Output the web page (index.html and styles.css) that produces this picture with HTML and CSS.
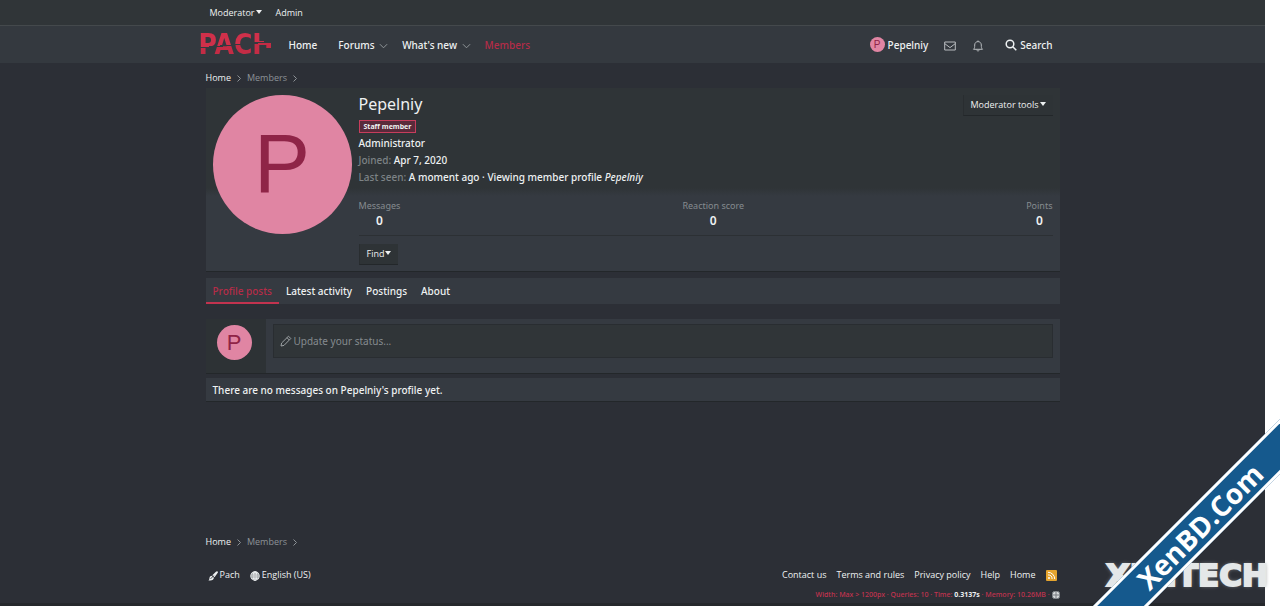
FILE: index.html
```html
<!DOCTYPE html>
<html lang="en-US">
<head>
    <meta charset="UTF-8">
    <meta name="viewport" content="width=device-width, initial-scale=1.0">
    <title>Pepelniy | Pach</title>
    <link rel="stylesheet" href="styles.css">
</head>
<body>
    <div class="page">
        <div class="staffBar">
            <div class="inner staffBar-inner">
                <button type="button" class="menuLink">Moderator<span class="caret"></span></button>
                <a href="#">Admin</a>
            </div>
        </div>
        <header class="nav">
            <div class="inner nav-inner">
                <a href="#" class="logo">PACH</a>
                <nav class="nav-list">
                    <a href="#" class="nav-home">Home</a>
                    <a href="#">Forums <svg class="chev" viewBox="0 0 10 6"><path d="M1 1l4 4 4-4"/></svg></a>
                    <a href="#">What's new <svg class="chev" viewBox="0 0 10 6"><path d="M1 1l4 4 4-4"/></svg></a>
                    <a href="#" class="selected">Members</a>
                </nav>
                <div class="nav-user">
                    <a href="#" class="userLink"><span class="avatar avatar--xxs">P</span>Pepelniy</a>
                    <a href="#" aria-label="Inbox"><svg class="icon" viewBox="0 0 12 12"><path d="M.7 2h10.6v8H.7zM.7 3.6L6 7.6l5.3-4"/></svg></a>
                    <a href="#" aria-label="Alerts"><svg class="icon" viewBox="0 0 12 12"><path d="M6 .5v1M1.5 9.3h9C9.300 8.200 9.300 7 9.300 5 9.300 2.900 7.800 1.600 6 1.600S2.700 2.900 2.700 5c0 2 0 3.200-1.200 4.300zM4.800 9.500c0 2 2.400 2 2.400 0"/></svg></a>
                    <a href="#" class="searchLink"><svg class="icon icon--search" viewBox="0 0 12 12"><circle cx="5" cy="5" r="3.800"/><path d="M7.800 7.800l3.500 3.500"/></svg>Search</a>
                </div>
            </div>
        </header>

        <div class="inner body">
            <div class="crumbs">
                <a href="#">Home</a>
                <svg class="arrow" viewBox="0 0 4 7"><path d="M.5.5l3 3-3 3"/></svg>
                <a href="#" class="dim">Members</a>
                <svg class="arrow" viewBox="0 0 4 7"><path d="M.5.5l3 3-3 3"/></svg>
            </div>

            <section class="member">
                <span class="avatar avatar--l">P</span>
                <div class="member-content">
                    <div class="member-head">
                        <div>
                            <h1>Pepelniy</h1>
                            <em class="banner">Staff member</em>
                            <div class="blurb">Administrator</div>
                            <div class="blurb"><span class="label">Joined:</span> Apr 7, 2020</div>
                            <div class="blurb"><span class="label">Last seen:</span> A moment ago · Viewing member profile <i>Pepelniy</i></div>
                        </div>
                        <button type="button" class="button">Moderator tools<span class="caret"></span></button>
                    </div>
                    <dl class="stats">
                        <div><dt>Messages</dt><dd>0</dd></div>
                        <div><dt>Reaction score</dt><dd>0</dd></div>
                        <div><dt>Points</dt><dd>0</dd></div>
                    </dl>
                    <button type="button" class="button button--find">Find<span class="caret"></span></button>
                </div>
            </section>

            <nav class="tabs">
                <a href="#" class="selected">Profile posts</a>
                <a href="#">Latest activity</a>
                <a href="#">Postings</a>
                <a href="#">About</a>
            </nav>

            <form class="post">
                <div class="post-user"><span class="avatar avatar--s">P</span></div>
                <div class="post-main">
                    <label class="post-input">
                        <svg class="icon icon--pencil" viewBox="0 0 12 12"><path d="M1 11l.6-3L8.500 1.200l2.300 2.300L4 10.400zM7 2.700L9.300 5"/></svg>
                        <input type="text" placeholder="Update your status..." aria-label="Update your status">
                    </label>
                </div>
            </form>
            <div class="notice">There are no messages on Pepelniy's profile yet.</div>
        </div>

        <footer class="inner footer">
            <div class="crumbs">
                <a href="#">Home</a>
                <svg class="arrow" viewBox="0 0 4 7"><path d="M.5.5l3 3-3 3"/></svg>
                <a href="#" class="dim">Members</a>
                <svg class="arrow" viewBox="0 0 4 7"><path d="M.5.5l3 3-3 3"/></svg>
            </div>
            <div class="footer-row">
                <div class="footer-links footer-links--left">
                    <a href="#"><svg class="icon icon--solid" viewBox="0 0 12 12"><path d="M11.500.5c.7.800.3 1.500 0 2L7.800 7.400 5.200 5.200 9.500.9c.5-.5 1.300-.9 2-.4zM4.400 5.700l2.700 2.500C7 10.500 4.800 12 .5 11.300c1.700-1 .8-2.300 1.500-3.900.5-1.100 1.300-1.600 2.400-1.700z"/><path class="cut" d="M3 9.500l4-4"/></svg>Pach</a>
                    <a href="#"><svg class="icon icon--globe" viewBox="0 0 12 12"><circle cx="6" cy="6" r="5"/><ellipse cx="6" cy="6" rx="2.300" ry="5"/><path d="M6 1v10M1 6h10M1.700 3.500h8.600M1.700 8.500h8.600"/></svg>English (US)</a>
                </div>
                <div class="footer-links">
                    <a href="#">Contact us</a>
                    <a href="#">Terms and rules</a>
                    <a href="#">Privacy policy</a>
                    <a href="#">Help</a>
                    <a href="#">Home</a>
                    <a href="#" aria-label="RSS"><svg class="rss" viewBox="0 0 11 11"><rect width="11" height="11" rx="1"/><circle cx="3" cy="8" r="1"/><path d="M2 4.900A4.100 4.100 0 0 1 6.100 9M2 2.300A6.700 6.700 0 0 1 8.700 9"/></svg></a>
                </div>
            </div>
            <div class="debug">Width: Max &gt; 1200px · Queries: 10 · Time: <b>0.3137s</b> · Memory: 10.26MB · <svg class="globe" viewBox="0 0 8 8"><circle cx="4" cy="4" r="4"/><path d="M0 4h8M4 0v8"/></svg></div>
        </footer>
        <div class="stamp">XENTECH</div>
    </div>
    <div class="corner"><div class="ribbon">XenBD.Com</div></div>
</body>
</html>
```
FILE: styles.css
```css
* {
    box-sizing: border-box;
}
html {
    height: 100%;
    background: #fff;
}
body {
    position: relative;
    min-height: 100%;
    margin: 0;
    display: flex;
    overflow: hidden;
    font-family: "Noto Sans", "Open Sans", sans-serif;
    font-size: 10px;
    font-weight: 500;
    line-height: 16px;
    color: #eef1f2;
}
a {
    color: inherit;
    text-decoration: none;
}
button {
    font: inherit;
    color: inherit;
    background: none;
    border: 0;
    padding: 0;
}
svg {
    fill: none;
    stroke: currentColor;
    flex: none;
}
.page {
    position: relative;
    flex: 1;
    min-height: 100vh;
    margin-right: 15px;
    display: flex;
    flex-direction: column;
    background: #2c2f36;
    border-bottom: 3px solid #25282c;
}
.inner {
    width: 100%;
    max-width: 854px;
    margin: 0 auto;
}
.caret {
    display: inline-block;
    margin-left: 1px;
    border: 3px solid transparent;
    border-top: 4px solid;
    border-bottom: 0;
    vertical-align: 2px;
}
.staffBar, .crumbs, .button, .footer-links {
    font-family: "Open Sans", "Noto Sans", sans-serif;
    font-size: 9px;
}

/* top bars */
.staffBar {
    background: #303538;
    border-bottom: 1px solid #44494c;
}
.staffBar-inner {
    display: flex;
    gap: 14px;
    padding: 5px 4px 4px;
}
.nav {
    background: #34393f;
}
.nav-inner {
    display: flex;
    align-items: center;
    height: 37px;
}
.logo {
    width: 72px;
    margin-left: -7px;
    font-family: "DejaVu Sans Condensed", "DejaVu Sans", sans-serif;
    font-weight: bold;
    font-size: 28px;
    line-height: 37px;
    color: transparent;
    background:
        linear-gradient(#c42c45, #c42c45) right 17px / 8px 5px no-repeat,
        linear-gradient(175deg, #d0304a 50%, transparent 50%, transparent 53%, #c42c45 53%) left / 65px 100% no-repeat;
    background-clip: text;
}
.nav-list {
    display: flex;
    gap: 14px;
    margin-left: 18px;
}
.nav-home {
    margin-right: 7px;
}
.selected {
    color: #b52c48;
}
.chev {
    width: 9px;
    height: 6px;
    margin-left: 2px;
    color: #9a9fa3;
}
.nav-user {
    display: flex;
    align-items: center;
    gap: 16px;
    margin-left: auto;
    padding-right: 7px;
}
.userLink, .searchLink {
    display: flex;
    align-items: center;
    gap: 3px;
}
.searchLink {
    margin-left: 5px;
}
.icon {
    width: 12px;
    height: 12px;
    color: #b8bcbf;
    vertical-align: middle;
}
.icon--search {
    color: #eef1f2;
    stroke-width: 1.500;
}
.icon--pencil {
    color: #9da2a5;
}
.avatar {
    display: flex;
    align-items: center;
    justify-content: center;
    flex: none;
    border-radius: 50%;
    background: #e085a3;
    color: #8f2447;
    font-family: "Liberation Sans", Arial, sans-serif;
    font-weight: 400;
}
.avatar--xxs {
    width: 15px;
    height: 15px;
    font-size: 10px;
}
.avatar--s {
    width: 35px;
    height: 35px;
    font-size: 22px;
}
.avatar--l {
    width: 139px;
    height: 139px;
    padding-bottom: 4px;
    font-size: 84px;
}

/* breadcrumbs */
.crumbs {
    display: flex;
    align-items: center;
    gap: 6px;
    padding: 7px 0 2px;
}
.dim {
    color: #8d9296;
}
.arrow {
    width: 4px;
    height: 7px;
    color: #8d9296;
}

/* member header */
.member {
    display: flex;
    gap: 7px;
    padding: 7px 7px 6px;
    background: linear-gradient(#2f3437 100px, #353a41 108px);
    border-bottom: 1px solid #23272a;
}
.member-content {
    flex: 1;
}
.member-head {
    display: flex;
    justify-content: space-between;
    align-items: flex-start;
}
h1 {
    margin: 0;
    font-size: 16px;
    font-weight: normal;
    line-height: 19px;
}
.banner {
    display: block;
    width: max-content;
    margin: 6px 0 2px;
    padding: 0 4px;
    border: 1px solid #c73d5c;
    background: #5a2a3b;
    font-size: 7px;
    font-style: normal;
    font-weight: 700;
    line-height: 11px;
}
.blurb {
    line-height: 17px;
}
.label {
    color: #7d8386;
}
.button {
    padding: 1px 7px;
    line-height: 18px;
    background: #2e3336;
    border-bottom: 1px solid #23272a;
    border-left: 1px solid #292d30;
}
.button--find {
    margin-top: 8px;
}
.stats {
    display: flex;
    justify-content: space-between;
    margin: 12px 0 0;
    padding-bottom: 6px;
    text-align: center;
    border-bottom: 1px solid #2c3034;
}
.stats dt {
    font-size: 9px;
    font-weight: 400;
    line-height: 15px;
    color: #858b8f;
}
.stats dd {
    margin: 0;
    font-size: 12px;
    font-weight: 600;
}

/* tabs */
.tabs {
    display: flex;
    margin-top: 6px;
    background: #353a41;
}
.tabs a {
    padding: 5px 7px 3px;
    border-bottom: 2px solid transparent;
}
.tabs .selected {
    border-color: #c2334f;
}

/* status form */
.post {
    display: flex;
    margin-top: 15px;
    border-bottom: 1px solid #23272a;
}
.post-user {
    padding: 6px 14px 8px 11px;
    background: #2d3235;
}
.post-main {
    flex: 1;
    padding: 5px 7px 15px;
    background: #353a41;
}
.post-input {
    display: flex;
    align-items: center;
    gap: 2px;
    height: 34px;
    padding: 0 6px;
    background: #303538;
    border: 1px solid #292d31;
}
.post-input input {
    flex: 1;
    padding: 0;
    border: 0;
    outline: 0;
    background: none;
    font: inherit;
    font-weight: 400;
    color: inherit;
}
.post-input input::placeholder {
    color: #858b8f;
}
.notice {
    margin-top: 4px;
    padding: 4px 7px 3px;
    background: #353a41;
    border-bottom: 1px solid #23272a;
}

/* footer */
.footer {
    margin-top: auto;
}
.footer-row {
    display: flex;
    justify-content: space-between;
    margin-top: 15px;
    padding: 0 3px 4px 2px;
}
.footer-links {
    display: flex;
    gap: 10px;
}
.footer-links .icon {
    width: 10px;
    height: 10px;
    margin-right: 2px;
    color: inherit;
}
.footer-links .icon--solid {
    fill: currentColor;
    stroke: none;
}
.icon--globe {
    stroke-width: 1.300;
}
.cut {
    stroke: #2c2f36;
}
.rss {
    width: 11px;
    height: 11px;
    vertical-align: middle;
    stroke: #fff;
}
.rss rect {
    fill: #e5a42e;
    stroke: none;
}
.rss circle {
    fill: #fff;
    stroke: none;
}
.debug {
    text-align: right;
    font-size: 7px;
    color: #c2334f;
}
.debug b {
    color: #eef1f2;
}
.globe {
    width: 8px;
    height: 8px;
    vertical-align: middle;
    fill: #d5d8da;
    stroke: #767b80;
}

/* corner marks */
.stamp {
    position: absolute;
    right: -3px;
    bottom: 12px;
    font-family: "DejaVu Sans", sans-serif;
    font-weight: bold;
    font-size: 31px;
    line-height: 31px;
    color: #e4e7e8;
    -webkit-text-stroke: 2px #e4e7e8;
    text-shadow: 0 0 4px #8d9194;
}
.corner {
    position: absolute;
    right: 0;
    bottom: 0;
    width: 200px;
    height: 200px;
    overflow: hidden;
}
.ribbon {
    position: absolute;
    left: -30px;
    top: 101px;
    width: 300px;
    border: solid #fff;
    border-width: 3px 0;
    background: #15598d;
    color: #fff;
    font: 700 28px/33px "Open Sans", "Noto Sans", sans-serif;
    text-align: center;
    transform: rotate(-45deg);
}
```
